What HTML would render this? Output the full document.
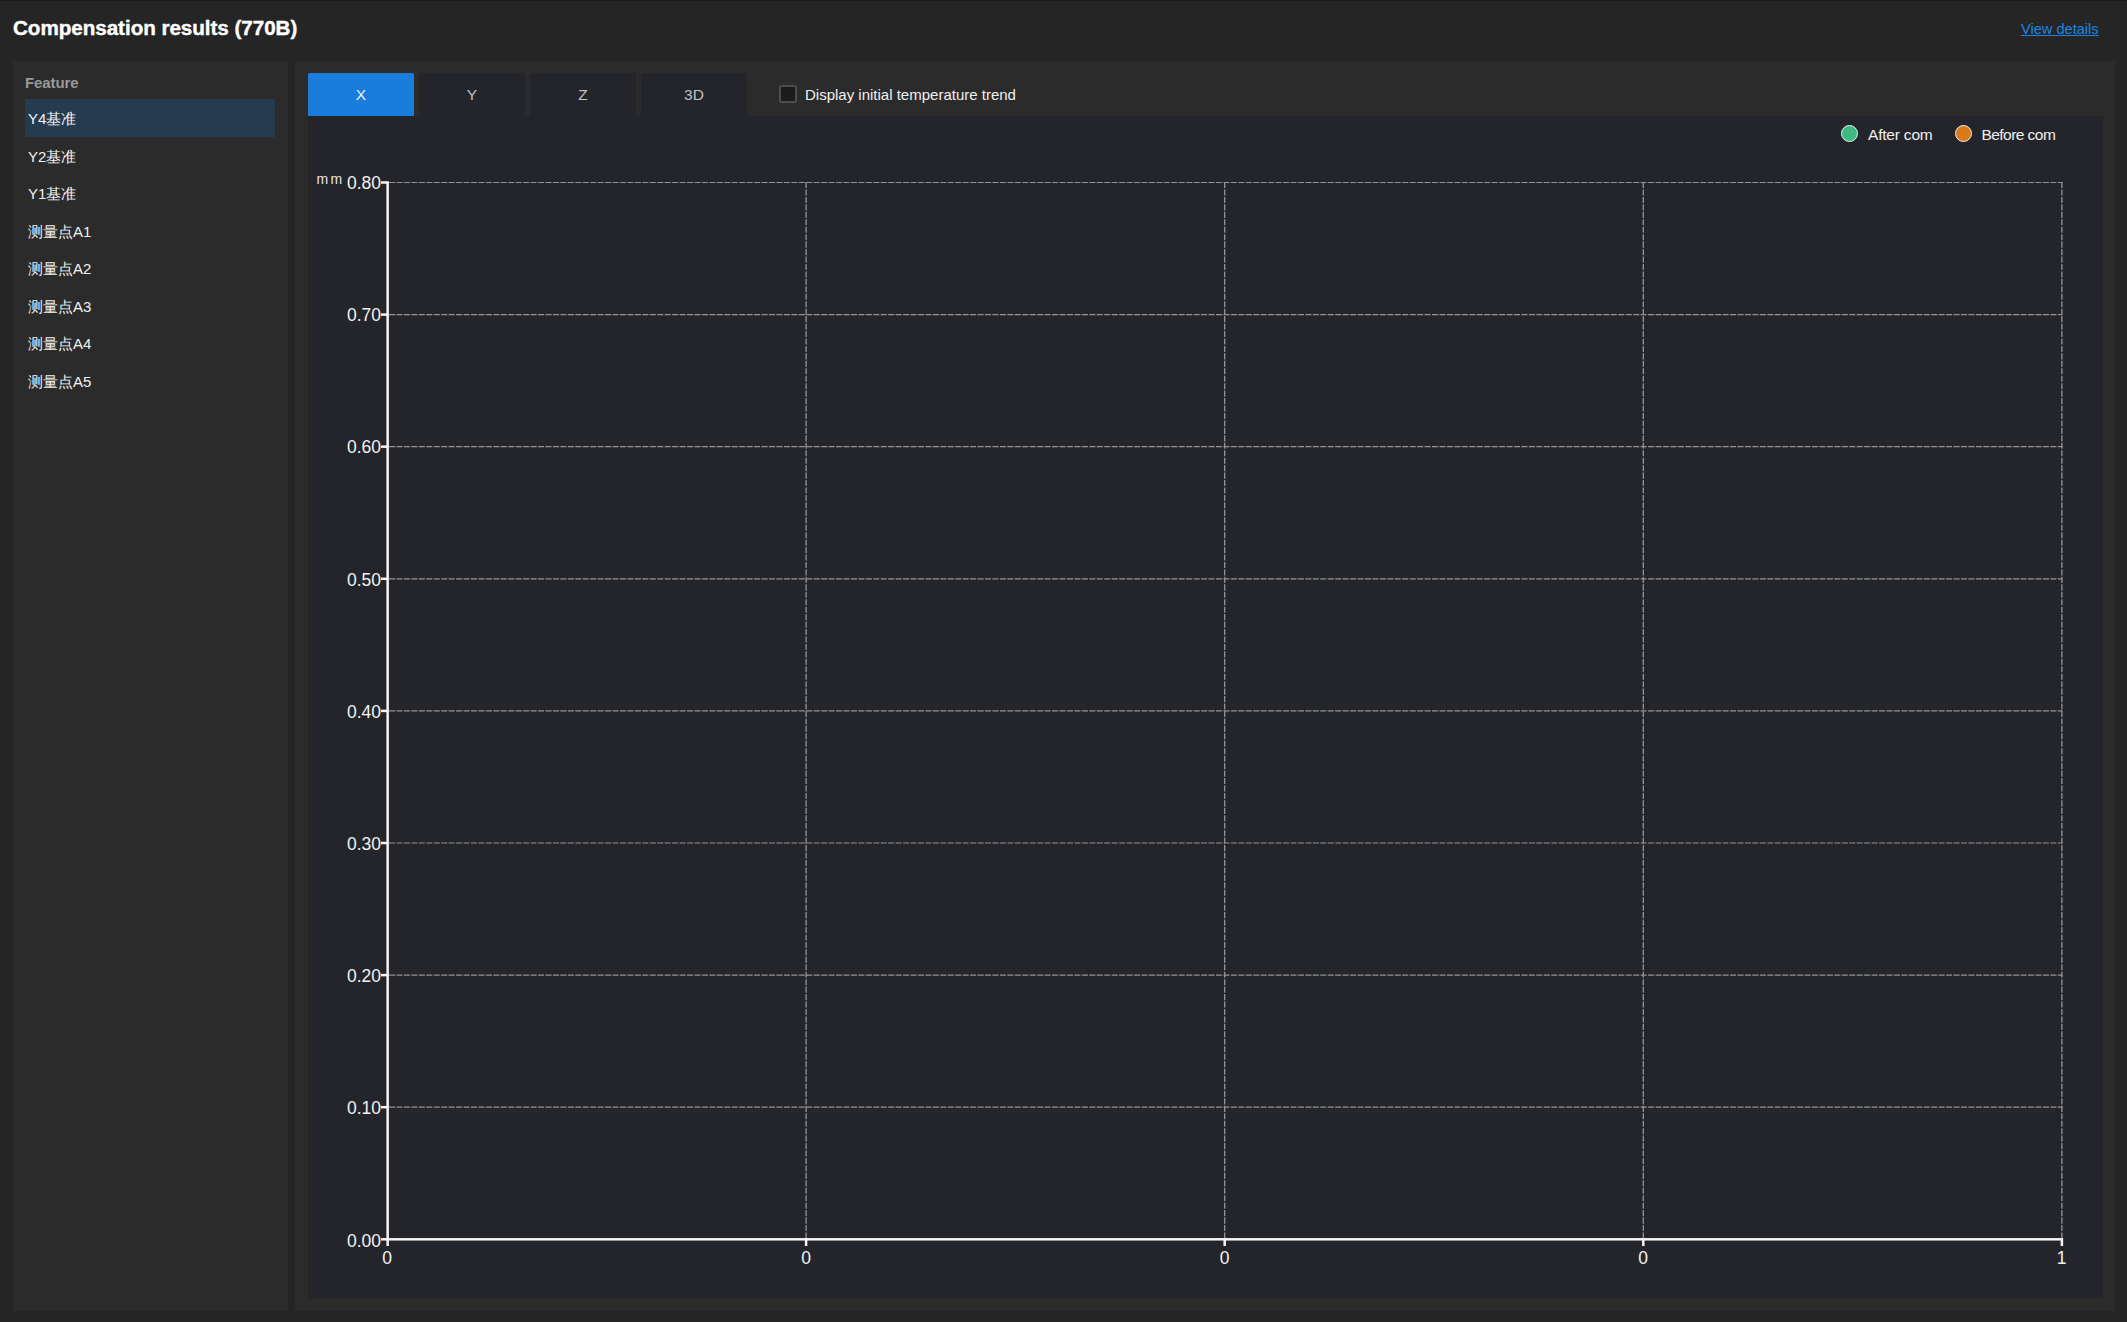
<!DOCTYPE html>
<html>
<head>
<meta charset="utf-8">
<style>
html,body{margin:0;padding:0;}
body{width:2127px;height:1322px;overflow:hidden;position:relative;background:#252525;font-family:"Liberation Sans",sans-serif;color:#e6e6e6;}
.abs{position:absolute;}
.t{position:absolute;white-space:nowrap;line-height:1;}
#topline{left:0;top:0;width:2127px;height:1px;background:#1b1b1b;}
#title{left:13px;top:18px;font-size:20.65px;font-weight:bold;color:#ffffff;-webkit-text-stroke:0.4px #ffffff;letter-spacing:-0.05px;}
#link{left:2021px;top:22px;font-size:14.6px;color:#1b86e6;text-decoration:underline;}
#lp{left:13px;top:61px;width:275px;height:1250px;background:#2b2b2b;}
#rp{left:295px;top:61px;width:1820px;height:1250px;background:#2b2b2b;}
#chart{left:308px;top:116px;width:1795px;height:1182px;background:#24252a;}
#feat{left:25px;top:75px;font-size:15px;letter-spacing:-0.1px;font-weight:bold;color:#999999;}
#sel{left:25px;top:99px;width:250px;height:38px;background:#263a50;}
.li{left:28px;font-size:15px;color:#f2f2f2;}
.tab{position:absolute;top:73px;width:106px;height:43px;background:#24252a;border-radius:2px 2px 0 0;}
.tab span{position:absolute;left:0;right:0;top:13.9px;text-align:center;font-size:15.5px;color:#c2c2c2;line-height:1;}
#tx{left:308px;background:#1a7ddc;}
#tx span{color:#e8eef6;}
#cb{left:779px;top:85px;width:14px;height:14px;border:2px solid #4d4d4d;background:#1b1b1b;border-radius:2.5px;}
#cbl{left:805px;top:87px;font-size:15px;color:#f0f0f0;}
.leg{position:absolute;top:125px;width:15px;height:15px;border-radius:50%;border:1.5px solid #f0f0f0;}
.ll{top:126.6px;font-size:15.5px;letter-spacing:-0.2px;color:#f0f0f0;}
.yl{position:absolute;left:300px;width:81px;text-align:right;font-size:17.5px;color:#f2f2f2;line-height:1;}
.xl{position:absolute;width:40px;text-align:center;font-size:17.5px;color:#f2f2f2;line-height:1;}
</style>
</head>
<body>
<div id="topline" class="abs"></div>
<div id="title" class="t">Compensation results (770B)</div>
<div id="link" class="t">View details</div>

<div id="lp" class="abs"></div>
<div id="rp" class="abs"></div>
<div id="chart" class="abs"></div>

<div id="feat" class="t">Feature</div>
<div id="sel" class="abs"></div>
<div class="t li" style="top:111.3px">Y4基准</div>
<div class="t li" style="top:148.9px">Y2基准</div>
<div class="t li" style="top:186.2px">Y1基准</div>
<div class="t li" style="top:224.1px">测量点A1</div>
<div class="t li" style="top:261.2px">测量点A2</div>
<div class="t li" style="top:299.2px">测量点A3</div>
<div class="t li" style="top:336.2px">测量点A4</div>
<div class="t li" style="top:374.2px">测量点A5</div>

<div class="tab" id="tx"><span>X</span></div>
<div class="tab" style="left:419px"><span>Y</span></div>
<div class="tab" style="left:530px"><span>Z</span></div>
<div class="tab" style="left:641px"><span>3D</span></div>
<div id="cb" class="abs"></div>
<div id="cbl" class="t">Display initial temperature trend</div>

<div class="leg" style="left:1841px;background:#3dba84"></div>
<div class="t ll" style="left:1868px">After com</div>
<div class="leg" style="left:1955px;background:#d97a1c"></div>
<div class="t ll" style="left:1981.5px;letter-spacing:-0.55px">Before com</div>

<svg class="abs" style="left:0;top:0" width="2127" height="1322">
  <g stroke="#939393" stroke-width="1.2" stroke-dasharray="6.1 1.35" fill="none">
    <line x1="389" y1="182.5" x2="2062.5" y2="182.5"/>
    <line x1="389" y1="314.6" x2="2062.5" y2="314.6"/>
    <line x1="389" y1="446.7" x2="2062.5" y2="446.7"/>
    <line x1="389" y1="578.8" x2="2062.5" y2="578.8"/>
    <line x1="389" y1="710.9" x2="2062.5" y2="710.9"/>
    <line x1="389" y1="843.0" x2="2062.5" y2="843.0"/>
    <line x1="389" y1="975.1" x2="2062.5" y2="975.1"/>
    <line x1="389" y1="1107.2" x2="2062.5" y2="1107.2"/>
  </g>
  <g stroke="#9a9a9a" stroke-width="1.25" stroke-dasharray="6.1 1.35" fill="none">
    <line x1="806.1" y1="182" x2="806.1" y2="1238"/>
    <line x1="1224.7" y1="182" x2="1224.7" y2="1238"/>
    <line x1="1643.3" y1="182" x2="1643.3" y2="1238"/>
    <line x1="2061.9" y1="182" x2="2061.9" y2="1238"/>
  </g>
  <g fill="#f4f4f4">
    <rect x="386.4" y="181.25" width="2.5" height="1064.75"/>
    <rect x="381" y="1238.05" width="1682" height="2.5"/>
    <rect x="381" y="181.25" width="6" height="2.5"/>
    <rect x="381" y="313.35" width="6" height="2.5"/>
    <rect x="381" y="445.45" width="6" height="2.5"/>
    <rect x="381" y="577.55" width="6" height="2.5"/>
    <rect x="381" y="709.65" width="6" height="2.5"/>
    <rect x="381" y="841.75" width="6" height="2.5"/>
    <rect x="381" y="973.85" width="6" height="2.5"/>
    <rect x="381" y="1105.95" width="6" height="2.5"/>
    <rect x="804.85" y="1238" width="2.5" height="8"/>
    <rect x="1223.45" y="1238" width="2.5" height="8"/>
    <rect x="1642.05" y="1238" width="2.5" height="8"/>
    <rect x="2060.65" y="1238" width="2.5" height="8"/>
  </g>
</svg>

<div class="t" style="left:316.5px;top:172px;font-size:14px;letter-spacing:2.4px;color:#e8e8e8">mm</div>
<div class="yl" style="top:175.25px">0.80</div>
<div class="yl" style="top:307.35px">0.70</div>
<div class="yl" style="top:439.45px">0.60</div>
<div class="yl" style="top:571.55px">0.50</div>
<div class="yl" style="top:703.65px">0.40</div>
<div class="yl" style="top:835.75px">0.30</div>
<div class="yl" style="top:967.85px">0.20</div>
<div class="yl" style="top:1099.95px">0.10</div>
<div class="yl" style="top:1233px">0.00</div>

<div class="xl" style="left:367px;top:1250px">0</div>
<div class="xl" style="left:786px;top:1250px">0</div>
<div class="xl" style="left:1204.5px;top:1250px">0</div>
<div class="xl" style="left:1623px;top:1250px">0</div>
<div class="xl" style="left:2041.5px;top:1250px">1</div>
</body>
</html>
